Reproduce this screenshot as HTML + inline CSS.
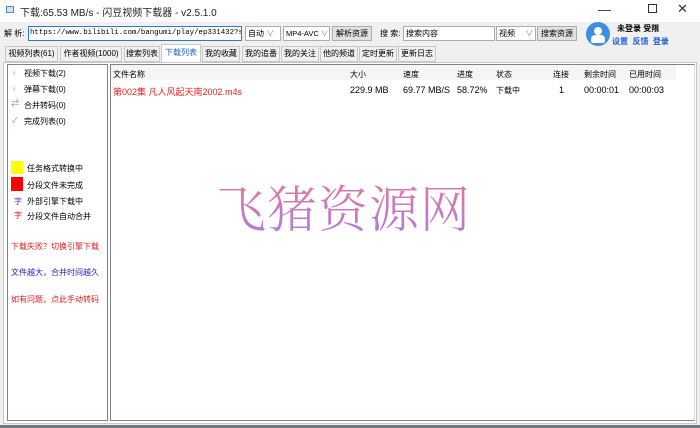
<!DOCTYPE html>
<html><head><meta charset="utf-8"><style>
*{margin:0;padding:0;box-sizing:border-box}
body{width:700px;height:428px;background:#f0f0f0;font-family:"Liberation Sans","Noto Sans CJK SC",sans-serif;font-size:8px;color:#000;position:relative;overflow:hidden}
.a{position:absolute;white-space:nowrap}
.l{font-size:9px}
.box{position:absolute;border:1px solid #adadad;background:#fff;white-space:nowrap;overflow:hidden}
.btn{position:absolute;border:1px solid #adadad;background:#e1e1e1;height:15px;line-height:13px;text-align:center;white-space:nowrap;overflow:hidden}
.tab{position:absolute;top:46px;height:16px;border:1px solid #c8c8c8;background:#f0f0f0;line-height:14px;text-align:center;white-space:nowrap;overflow:hidden}
</style></head><body>
<div class="a" style="left:0;top:0;width:700px;height:22px;background:#fff"></div>
<div class="a" style="left:6px;top:6px;width:8px;height:7px;border:1px solid #4a8cc8;background:#cfe3f5"></div>
<div class="a" style="left:20px;top:4px;font-size:10px;color:#222">下载:65.53 MB/s - 闪豆视频下载器 - v2.5.1.0</div>
<div class="a" style="left:598px;top:2px;font-size:13px;color:#333">—</div>
<div class="a" style="left:648px;top:4px;width:9px;height:9px;border:1px solid #333"></div>
<div class="a" style="left:677px;top:1px;font-size:13px;color:#333">✕</div>

<div class="a" style="left:4px;top:28px">解 析:</div>
<div class="box" style="left:28px;top:26px;width:214px;height:15px;border-color:#2b7bd0;font-family:'Liberation Mono',monospace;font-size:7.4px;line-height:13px;padding-left:1px">https://www.bilibili.com/bangumi/play/ep331432?spm_id</div>
<div class="box" style="left:245px;top:26px;width:36px;height:15px;line-height:13px;padding-left:2px">自动 <span style="color:#888">∨</span></div>
<div class="box" style="left:283px;top:26px;width:47px;height:15px;line-height:13px;padding-left:2px;font-size:7.5px">MP4-AVC <span style="color:#888">∨</span></div>
<div class="btn" style="left:332px;top:26px;width:40px">解析资源</div>
<div class="a" style="left:380px;top:28px">搜 索:</div>
<div class="box" style="left:403px;top:26px;width:92px;height:15px;line-height:13px;padding-left:2px">搜索内容</div>
<div class="box" style="left:496px;top:26px;width:40px;height:15px;line-height:13px;padding-left:2px">视频 <span style="color:#888;margin-left:8px">∨</span></div>
<div class="btn" style="left:537px;top:26px;width:40px">搜索资源</div>
<div class="a" style="left:586px;top:22px;width:24px;height:24px;border-radius:50%;background:#3d8fe0;overflow:hidden">
 <div class="a" style="left:8px;top:5px;width:8px;height:8px;border-radius:50%;background:#fff"></div>
 <div class="a" style="left:5px;top:13px;width:14px;height:8px;border-radius:4px 4px 2px 2px;background:#fff"></div>
</div>
<div class="a" style="left:617px;top:23px;font-weight:bold">未登录 受限</div>
<div class="a" style="left:612px;top:36px;font-weight:bold;color:#1a5fd0">设置 &nbsp;反馈 &nbsp;登录</div>

<div class="tab" style="left:5px;width:53px">视频列表(61)</div>
<div class="tab" style="left:60px;width:62px">作者视频(1000)</div>
<div class="tab" style="left:124px;width:36px">搜索列表</div>
<div class="tab" style="left:161px;width:40px;background:#fff;color:#1a5fd0;top:44px;height:19px;border-bottom:none;line-height:16px">下载列表</div>
<div class="tab" style="left:202px;width:38px">我的收藏</div>
<div class="tab" style="left:242px;width:38px">我的追番</div>
<div class="tab" style="left:281px;width:38px">我的关注</div>
<div class="tab" style="left:320px;width:38px">他的频道</div>
<div class="tab" style="left:359px;width:38px">定时更新</div>
<div class="tab" style="left:398px;width:38px">更新日志</div>

<div class="a" style="left:3px;top:62px;width:694px;height:362px;background:#fff;border:1px solid #c8c8c8"></div>
<div class="box" style="left:7px;top:64px;width:101px;height:357px;border-color:#828282"></div>
<div class="box" style="left:110px;top:64px;width:585px;height:357px;border-color:#828282;border-right-color:#ddd"></div>
<div class="a" style="left:111px;top:65px;width:565px;height:15px;background:#f5f5f5"></div>

<div class="a" style="left:12px;top:67px;color:#6aa0d8">↓</div><div class="a" style="left:24px;top:68px">视频下载(2)</div>
<div class="a" style="left:12px;top:83px;color:#6aa0d8">↓</div><div class="a" style="left:24px;top:84px">弹幕下载(0)</div>
<div class="a" style="left:11px;top:98px;color:#4a8cd0">⇄</div><div class="a" style="left:24px;top:100px">合并转码(0)</div>
<div class="a" style="left:12px;top:115px;color:#6aa0d8">✓</div><div class="a" style="left:24px;top:116px">完成列表(0)</div>

<div class="a" style="left:11px;top:161px;width:12px;height:13px;background:#ffff00"></div><div class="a" style="left:27px;top:163px">任务格式转换中</div>
<div class="a" style="left:11px;top:177px;width:12px;height:14px;background:#ff0000"></div><div class="a" style="left:27px;top:180px">分段文件未完成</div>
<div class="a" style="left:14px;top:196px;color:#7030c0">字</div><div class="a" style="left:27px;top:196px">外部引擎下载中</div>
<div class="a" style="left:14px;top:210px;color:#e02020">字</div><div class="a" style="left:27px;top:211px">分段文件自动合并</div>
<div class="a" style="left:11px;top:241px;color:#e02020">下载失败？切换引擎下载</div>
<div class="a" style="left:11px;top:267px;color:#2020d0">文件越大，合并时间越久</div>
<div class="a" style="left:11px;top:294px;color:#e02020">如有问题，点此手动转码</div>

<div class="a" style="left:113px;top:69px">文件名称</div>
<div class="a" style="left:350px;top:69px">大小</div>
<div class="a" style="left:403px;top:69px">速度</div>
<div class="a" style="left:457px;top:69px">进度</div>
<div class="a" style="left:496px;top:69px">状态</div>
<div class="a" style="left:553px;top:69px">连接</div>
<div class="a" style="left:584px;top:69px">剩余时间</div>
<div class="a" style="left:629px;top:69px">已用时间</div>
<div class="a l" style="left:113px;top:85px;color:#e82020">第002集 凡人风起天南2002.m4s</div>
<div class="a l" style="left:350px;top:85px">229.9 MB</div>
<div class="a l" style="left:403px;top:85px">69.77 MB/S</div>
<div class="a l" style="left:457px;top:85px">58.72%</div>
<div class="a" style="left:496px;top:85px">下载中</div>
<div class="a l" style="left:559px;top:85px">1</div>
<div class="a l" style="left:584px;top:85px">00:00:01</div>
<div class="a l" style="left:629px;top:85px">00:00:03</div>

<div class="a" style="left:216px;top:176px;font-family:'Noto Serif CJK SC',serif;font-weight:300;font-size:50px;line-height:60px;letter-spacing:1px;background:linear-gradient(#e8789a,#b07ae0);-webkit-background-clip:text;background-clip:text;color:transparent">飞猪资源网</div>
<div class="a" style="left:0;top:425px;width:700px;height:3px;background:#6c7a80"></div>
</body></html>
